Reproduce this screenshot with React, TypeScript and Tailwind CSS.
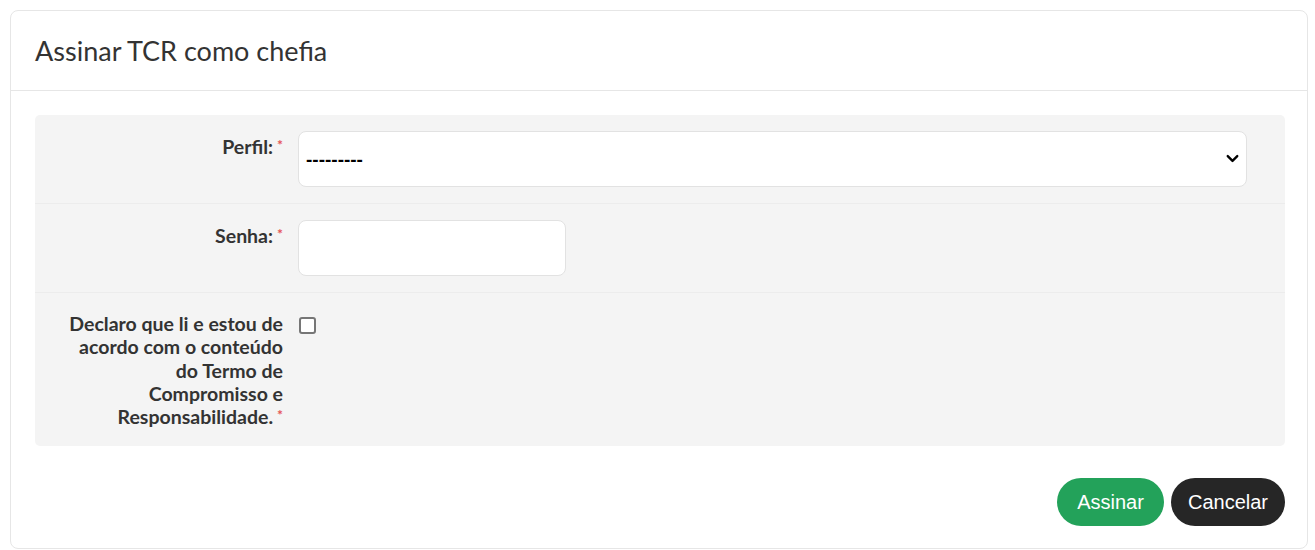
import { ChevronDown } from 'lucide-react'

const Req = () => (
  <span className="relative top-[-4px] ml-[4px] text-[14px] leading-none text-[#e55353]">*</span>
)

export default function App() {
  return (
    <div className="min-h-[550px] bg-white pt-[10px] pl-[10px] font-['Lato','Noto_Sans',sans-serif] text-[#333]">
      <div className="w-[1298px] h-[539px] rounded-[8px] border border-[#e6e6e6] bg-white">
        <div className="h-[80px] border-b border-[#e6e6e6] pl-[24px] flex items-center">
          <h1 className="text-[27px] leading-none text-[#333]">Assinar TCR como chefia</h1>
        </div>

        <div className="pt-[24px] pl-[24px] pr-[22px]">
          <div className="rounded-[5px] bg-[#f4f4f4]">
            <div className="flex gap-[15px] py-[16px] border-b border-[#ececec]">
              <label className="w-[248px] shrink-0 text-right text-[19.5px] font-bold leading-[23px] pt-[4px]">
                Perfil:<Req />
              </label>
              <div className="relative w-[949px] h-[56px] rounded-[8px] border border-[#e2e2e2] bg-white flex items-center pl-[7px]">
                <span className="font-['Liberation_Sans',Arial,sans-serif] text-[19px] text-black font-bold pt-[2px]">---------</span>
                <ChevronDown className="absolute right-[4px] top-[17px] w-[19px] h-[19px] text-black" strokeWidth={3} />
              </div>
            </div>

            <div className="flex gap-[15px] py-[16px] border-b border-[#ececec]">
              <label className="w-[248px] shrink-0 text-right text-[19.5px] font-bold leading-[23px] pt-[4px]">
                Senha:<Req />
              </label>
              <div className="w-[268px] h-[56px] rounded-[8px] border border-[#e2e2e2] bg-white" />
            </div>

            <div className="flex gap-[15px] pt-[19px] pb-[18px]">
              <label className="w-[248px] shrink-0 text-right text-[19.5px] font-bold leading-[23.3px] pl-[26px]">
                Declaro que li e estou de acordo com o conteúdo do Termo de Compromisso e Responsabilidade.<Req />
              </label>
              <div className="pt-[5px] pl-[1px]">
                <div className="w-[17px] h-[17px] rounded-[3px] border-2 border-[#767676] bg-white" />
              </div>
            </div>
          </div>

          <div className="flex justify-end gap-[7px] pt-[32px]">
            <button className="h-[48px] w-[107px] rounded-full bg-[#23a25a] text-white text-[20px] font-['Liberation_Sans',Arial,sans-serif]">
              Assinar
            </button>
            <button className="h-[48px] w-[114px] rounded-full bg-[#262626] text-white text-[20px] font-['Liberation_Sans',Arial,sans-serif]">
              Cancelar
            </button>
          </div>
        </div>
      </div>
    </div>
  )
}
